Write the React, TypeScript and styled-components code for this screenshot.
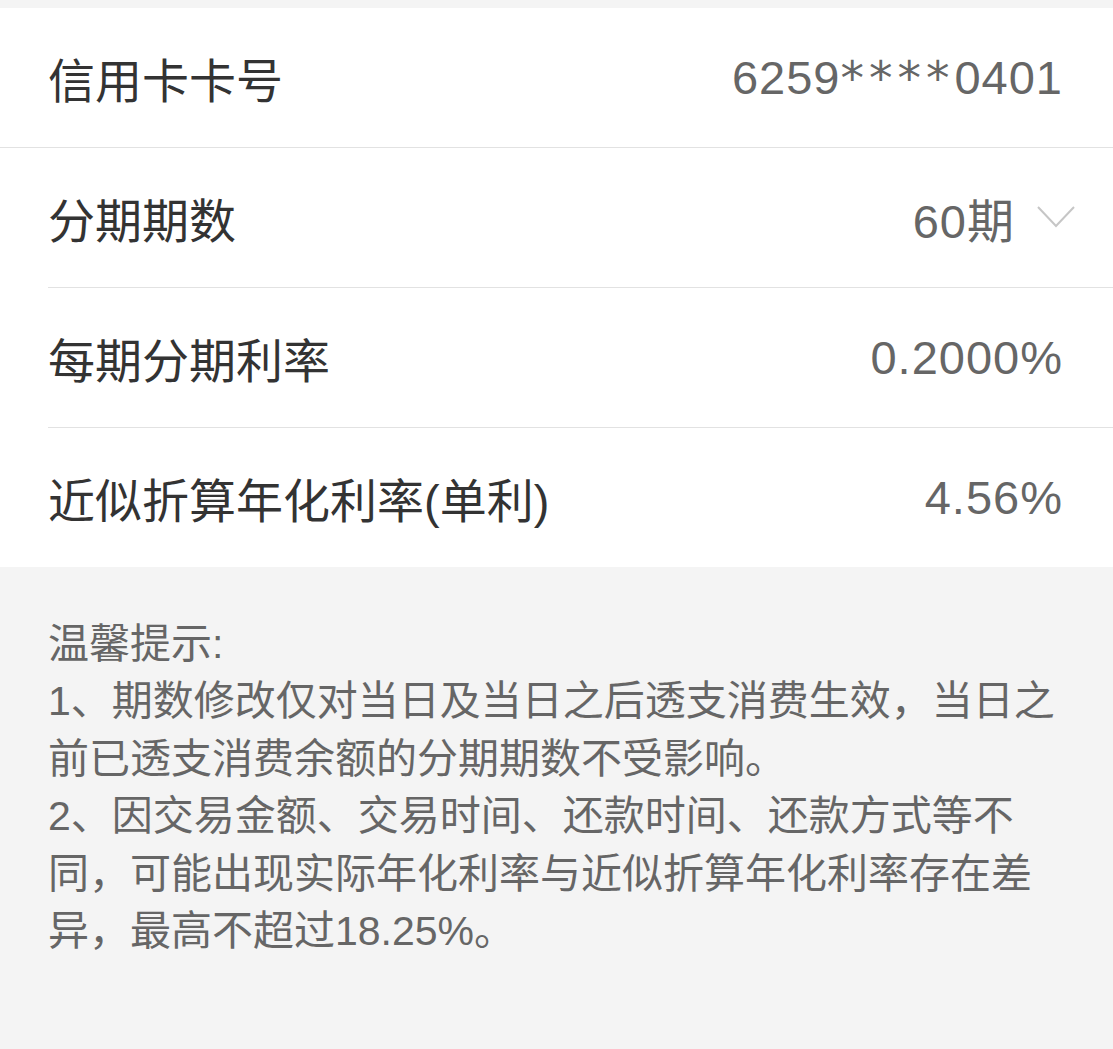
import { createGlobalStyle, styled } from 'styled-components';

const GlobalStyle = createGlobalStyle`
  body {
    margin: 0;
    background-color: #f4f4f4;
    font-family: "Liberation Sans", "Noto Sans CJK SC", sans-serif;
  }
`;

const INFO_LIST = [
  { label: '信用卡卡号', value: 'card', full: true },
  { label: '分期期数', value: '60期', select: true },
  { label: '每期分期利率', value: '0.2000%' },
  { label: '近似折算年化利率(单利)', value: '4.56%', last: true },
];

const NOTES = [
  '1、期数修改仅对当日及当日之后透支消费生效，当日之前已透支消费余额的分期期数不受影响。',
  '2、因交易金额、交易时间、还款时间、还款方式等不同，可能出现实际年化利率与近似折算年化利率存在差异，最高不超过18.25%。',
];

function App() {
  return (
    <Page>
      <GlobalStyle />

      <Panel>
        {
          INFO_LIST.map((item) => (
            <Row key={ item.label } $full={ item.full }>
              <RowInner $noBorder={ item.full || item.last }>
                <Label>{ item.label }</Label>
                <Value>
                  {
                    item.value === 'card'
                      ? <>6259<Mask>****</Mask>0401</>
                      : item.value
                  }
                  {/* 下拉箭头 */}
                  { item.select && (
                    <Chevron viewBox="0 0 40 26">
                      <path d="M2 2 L20 21 L38 2" />
                    </Chevron>
                  ) }
                </Value>
              </RowInner>
            </Row>
          ))
        }
      </Panel>

      <Notice>
        <div>温馨提示:</div>
        { NOTES.map((note) => <p key={ note }>{ note }</p>) }
      </Notice>
    </Page>
  );
}

export default App;


const Page = styled.div`
padding-top: 8px;
min-height: 1041px;
background-color: #f4f4f4;
`;

const Panel = styled.div`
background-color: #fff;
`;

const Row = styled.div<{ $full?: boolean }>`
padding-left: 48px;
border-bottom: ${ (p) => (p.$full ? '1px solid #e2e2e2' : 'none') };
`;

const RowInner = styled.div<{ $noBorder?: boolean }>`
display: flex;
align-items: center;
justify-content: space-between;
height: 139px;
padding-right: 50px;
border-bottom: ${ (p) => (p.$noBorder ? 'none' : '1px solid #e2e2e2') };
`;

const Label = styled.span`
font-size: 47px;
color: #333;
`;

const Value = styled.span`
display: flex;
align-items: center;
font-size: 47px;
letter-spacing: 1px;
color: #666;
`;

const Mask = styled.span`
font-family: "DejaVu Sans", sans-serif;
letter-spacing: 5px;
`;

const Chevron = styled.svg`
width: 40px;
height: 26px;
margin-left: 21px;
margin-right: -13px;
fill: none;
stroke: #c6c6c6;
stroke-width: 2;
`;

const Notice = styled.div`
padding: 49px 48px 44px;
font-size: 41px;
line-height: 57.4px;
color: #666;

p {
  margin: 0;
}
`;
